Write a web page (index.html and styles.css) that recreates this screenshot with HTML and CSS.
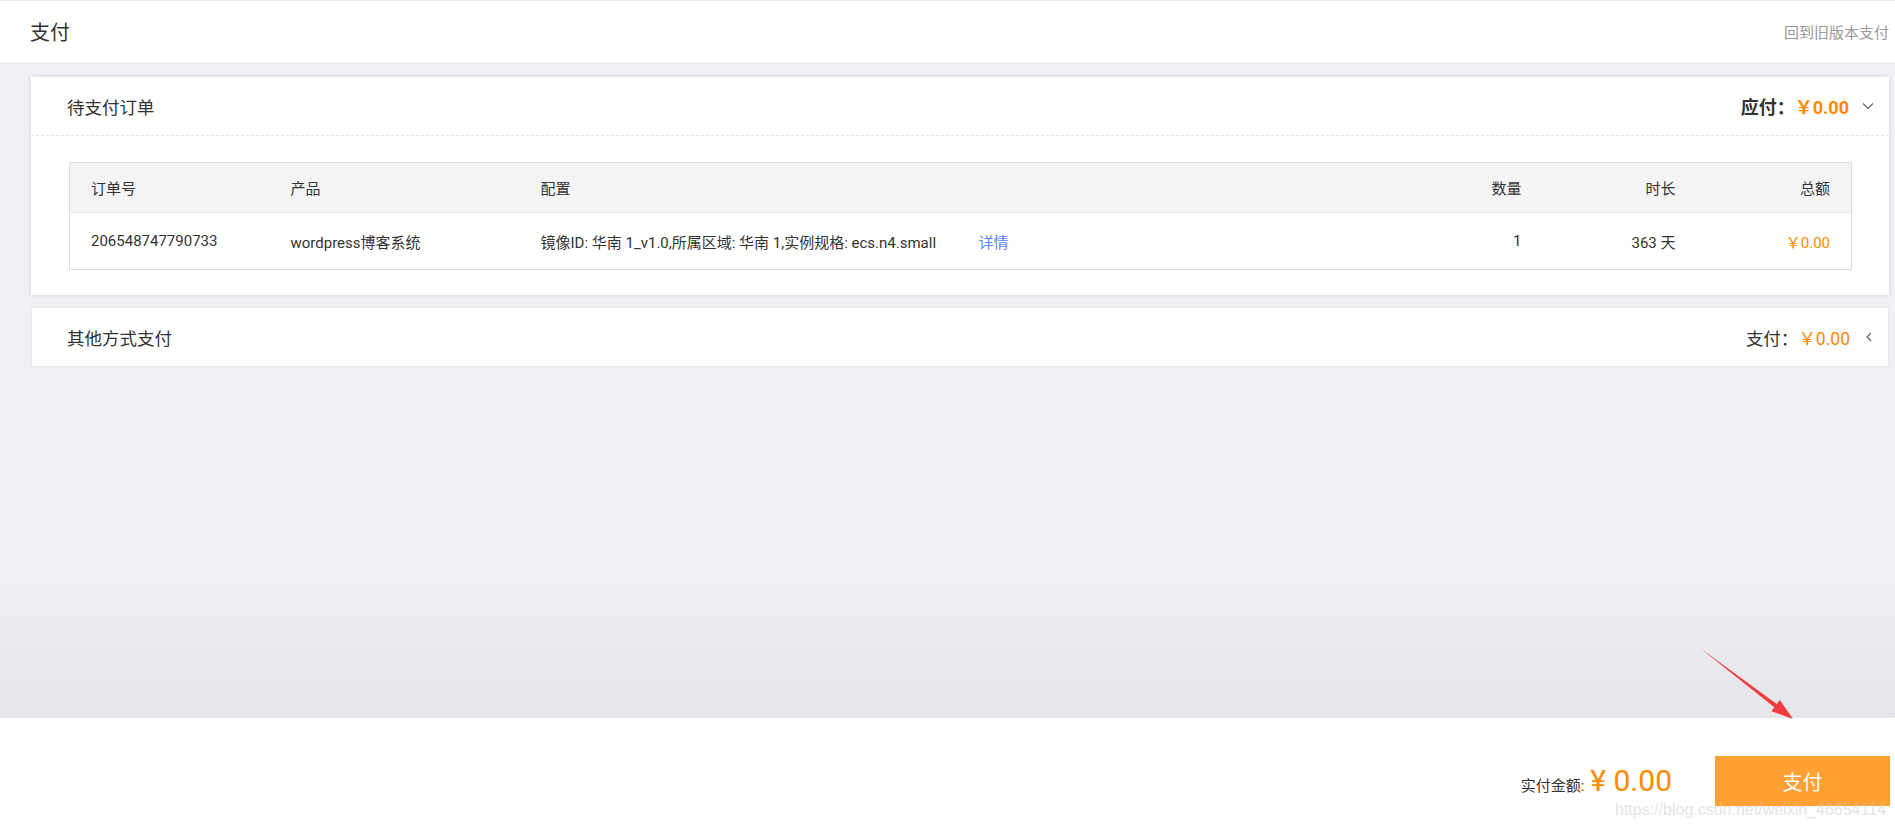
FILE: index.html
```html
<!DOCTYPE html>
<html lang="zh-CN">
<head>
<meta charset="utf-8">
<title>支付</title>
<link rel="stylesheet" href="styles.css">
</head>
<body>
<div class="page">
  <header class="topbar">
    <div class="topbar-title">支付</div>
    <a class="topbar-link">回到旧版本支付</a>
  </header>

  <main class="main">
    <section class="card card-order">
      <div class="card-head">
        <div class="card-title">待支付订单</div>
        <div class="card-right">
          <span class="due-label">应付：</span><span class="due-amount">￥0.00</span>
          <svg class="chev-down" width="12" height="8" viewBox="0 0 12 8"><path d="M1 1.5 L6 6.5 L11 1.5" fill="none" stroke="#666" stroke-width="1.2"/></svg>
        </div>
      </div>
      <div class="card-body">
        <table class="order-table">
          <colgroup>
            <col class="c1"><col class="c2"><col class="c3"><col class="c4"><col class="c5"><col class="c6"><col class="c7">
          </colgroup>
          <thead>
            <tr>
              <th>订单号</th>
              <th>产品</th>
              <th>配置</th>
              <th></th>
              <th class="r">数量</th>
              <th class="r">时长</th>
              <th class="r">总额</th>
            </tr>
          </thead>
          <tbody>
            <tr>
              <td>206548747790733</td>
              <td>wordpress博客系统</td>
              <td>镜像ID: 华南 1_v1.0,所属区域: 华南 1,实例规格: ecs.n4.small</td>
              <td><a class="detail">详情</a></td>
              <td class="r">1</td>
              <td class="r">363 天</td>
              <td class="r price">￥0.00</td>
            </tr>
          </tbody>
        </table>
      </div>
    </section>

    <section class="card card-other">
      <div class="card-title">其他方式支付</div>
      <div class="card-right">
        <span class="pay-label">支付：</span><span class="pay-amount">￥0.00</span>
        <svg class="chev-left" width="6" height="10" viewBox="0 0 6 10"><path d="M5 1 L1 5 L5 9" fill="none" stroke="#666" stroke-width="1.2"/></svg>
      </div>
    </section>
  </main>

  <footer class="paybar">
    <div class="paybar-sum">
      <span class="sum-label">实付金额:</span><span class="sum-amount">¥ 0.00</span>
    </div>
    <button class="pay-btn">支付</button>
    <div class="watermark">https://blog.csdn.net/weixin_46654114</div>
  </footer>

  <svg class="arrow" width="105" height="82" viewBox="0 0 105 82">
    <polygon points="5,5 81.7,61 84.8,57 98,76 76.3,68.2 79.3,64.2" fill="#f03c3c"/>
  </svg>
</div>
</body>
</html>
```

FILE: styles.css
```css
* {
  box-sizing: border-box;
}

body {
  margin: 0;
  font-family: Roboto, "Noto Sans CJK SC", sans-serif;
  color: #333;
}

.page {
  width: 1895px;
  height: 829px;
  display: flex;
  flex-direction: column;
  position: relative;
  overflow: hidden;
  background: #efeff4;
}

.topbar {
  height: 62px;
  flex: none;
  border-top: 1px solid #e6e6e6;
  background: #fff;
  display: flex;
  align-items: center;
  justify-content: space-between;
  padding: 0 6px 0 30px;
}

.topbar-title {
  font-size: 20px;
  color: #333;
}

.topbar-link {
  font-size: 15px;
  color: #999;
}

.main {
  flex: 1;
  padding: 15px 6px 0 31px;
  background: linear-gradient(to bottom, #efeff4 0, #efeff4 calc(100% - 150px), #e6e6ea 100%);
}

.card {
  background: #fff;
}

.card-order {
  box-shadow: 0 0 5px rgba(0, 0, 0, 0.12);
}

.card-head {
  height: 59px;
  display: flex;
  align-items: center;
  justify-content: space-between;
  padding: 0 15px 0 36px;
  border-bottom: 1px dashed #e6e6e6;
}

.card-title {
  font-size: 17.5px;
  color: #333;
}

.card-right {
  display: flex;
  align-items: center;
}

.due-label {
  font-size: 18px;
  font-weight: bold;
  color: #333;
}

.due-amount {
  font-size: 18px;
  font-weight: bold;
  color: #ff8a00;
}

.chev-down {
  margin-left: 13px;
}

.card-body {
  padding: 26px 38px 25px;
}

.order-table {
  width: 100%;
  border-collapse: collapse;
  table-layout: fixed;
  border: 1px solid #dcdcdc;
  font-size: 15px;
}

.c1 { width: 200px; }
.c2 { width: 250px; }
.c3 { width: 438px; }
.c4 { width: 431px; }
.c5 { width: 154px; }
.c6 { width: 154px; }
.c7 { width: 155px; }

.order-table th {
  height: 50px;
  background: #f4f4f4;
  font-weight: normal;
  text-align: left;
  padding: 0 21px;
  border-bottom: 1px solid #e8e8e8;
  color: #333;
}

.order-table td {
  height: 57px;
  padding: 0 21px;
  white-space: nowrap;
  color: #333;
}

.order-table .r {
  text-align: right;
}

.order-table .price {
  color: #ff8a00;
}

.detail {
  color: #5a7ff0;
}

.card-other {
  margin-top: 12px;
  height: 60px;
  border: 1px solid #e8e8ec;
  display: flex;
  align-items: center;
  justify-content: space-between;
  padding: 0 16px 0 35px;
}

.pay-label {
  font-size: 17.5px;
  color: #333;
}

.pay-amount {
  font-size: 17.5px;
  color: #ff8a00;
}

.chev-left {
  margin-left: 16px;
}

.paybar {
  height: 111px;
  flex: none;
  background: #fff;
  position: relative;
  display: flex;
  justify-content: flex-end;
  align-items: flex-start;
  padding: 38px 5px 0 0;
}

.paybar-sum {
  display: flex;
  align-items: baseline;
  line-height: 50px;
  margin-right: 43px;
}

.sum-label {
  font-size: 15px;
  color: #333;
  margin-right: 6px;
}

.sum-amount {
  font-size: 30px;
  color: #ff8a00;
}

.pay-btn {
  width: 175px;
  height: 50px;
  border: none;
  background: #ffa033;
  color: #fff;
  font-family: Roboto, "Noto Sans CJK SC", sans-serif;
  font-size: 20px;
}

.watermark {
  position: absolute;
  left: 1615px;
  top: 83px;
  font-family: "Liberation Sans", sans-serif;
  font-size: 16px;
  line-height: 18px;
  color: rgba(200, 200, 200, 0.5);
  white-space: nowrap;
}

.arrow {
  position: absolute;
  left: 1695px;
  top: 643px;
}
```
